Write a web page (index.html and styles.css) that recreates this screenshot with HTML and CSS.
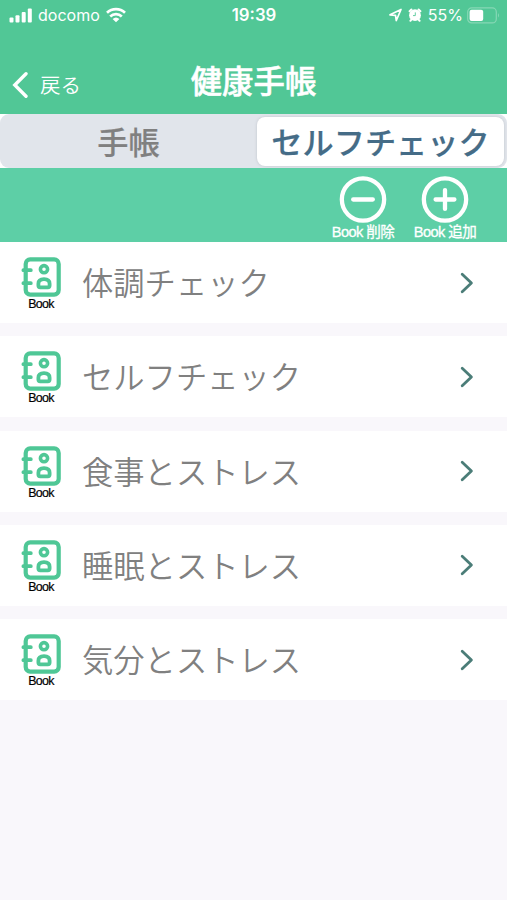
FILE: index.html
```html
<!DOCTYPE html>
<html lang="ja">
<head>
    <meta charset="UTF-8">
    <meta name="viewport" content="width=device-width, initial-scale=1.0">
    <title>健康手帳</title>
    <link rel="stylesheet" href="styles.css">
</head>
<body>
    <svg class="defs" width="0" height="0">
        <symbol id="book" viewBox="0 0 40 40">
            <g fill="none" stroke="#4fc796" stroke-linecap="round">
                <rect x="4.7" y="2.4" width="33" height="35.2" rx="4.5" stroke-width="4.2"/>
                <path d="M2.4 13.2h7.4M2.4 26.2h7.4" stroke-width="3.8"/>
                <circle cx="23" cy="12.2" r="3.6" stroke-width="3.6"/>
                <path d="M17.4 28.6v-1.8q0-4.6 5.6-4.6t5.6 4.6v1.8q0 1.8-1.8 1.8h-7.6q-1.8 0-1.8-1.8z" stroke-width="3.8" stroke-linejoin="round"/>
            </g>
        </symbol>
        <symbol id="arrow" viewBox="0 0 14 22">
            <path d="M2.2 2.2 11.4 11 2.2 19.8" fill="none" stroke="#4b7d78" stroke-width="2.8" stroke-linecap="round" stroke-linejoin="round"/>
        </symbol>
    </svg>

    <div class="header">
        <div class="status">
            <div class="status-left">
                <svg width="23" height="15" viewBox="0 0 23 15" fill="#fff">
                    <rect x="0.5" y="9.5" width="4" height="5" rx="1"/>
                    <rect x="6.5" y="7.3" width="4" height="7.2" rx="1"/>
                    <rect x="12.7" y="4" width="4" height="10.5" rx="1"/>
                    <rect x="18.8" y="0.5" width="4" height="14" rx="1"/>
                </svg>
                <span class="carrier">docomo</span>
                <svg width="20" height="16" viewBox="0 0 20 16" fill="none" stroke="#fff" stroke-width="2.7">
                    <path d="M1 5.8a13 13 0 0 1 18 0"/>
                    <path d="M4.2 9.4a8.4 8.4 0 0 1 11.6 0"/>
                    <path d="M10 15.2 6.6 12a5 5 0 0 1 6.8 0z" fill="#fff" stroke="none"/>
                </svg>
            </div>
            <span class="time">19:39</span>
            <div class="status-right">
                <svg width="13" height="14" viewBox="0 0 13 14" fill="none" stroke="#fff" stroke-width="1.7" stroke-linejoin="round">
                    <path d="M1 6.8 12 1.5 7.3 12.5 6.5 7.3z"/>
                </svg>
                <svg class="alarm" width="14" height="14" viewBox="0 0 14 14">
                    <circle cx="7" cy="7.2" r="5.9" fill="#fff"/>
                    <path d="M1.6 3.2 3.4 1.5M12.4 3.2 10.6 1.5M3.2 11.8 2.4 12.8M10.8 11.8l.8 1" stroke="#fff" stroke-width="2" stroke-linecap="round"/>
                    <path d="M7.3 4.4v3.2H5" fill="none" stroke="#51c796" stroke-width="0.9"/>
                </svg>
                <span class="percent">55%</span>
                <svg width="33" height="17" viewBox="0 0 33 17">
                    <rect x="0.7" y="0.9" width="28.6" height="15" rx="4" fill="none" stroke="#86d8b5" stroke-width="1.2"/>
                    <rect x="2.6" y="2.8" width="13.6" height="11.2" rx="2" fill="#fff"/>
                    <path d="M31 6v4.6q2-2.3 0-4.6" fill="#86d8b5"/>
                </svg>
            </div>
        </div>
        <div class="nav">
            <a class="back">
                <svg width="16" height="26" viewBox="0 0 16 26">
                    <path d="M14 1.8 2.8 13 14 24.2" fill="none" stroke="#fff" stroke-width="3.4" stroke-linecap="round"/>
                </svg>
                <span>戻る</span>
            </a>
            <h1 class="title">健康手帳</h1>
        </div>
    </div>

    <div class="tabs">
        <div class="tab">手帳</div>
        <div class="tab active">セルフチェック</div>
    </div>

    <div class="tools">
        <div class="tool">
            <svg width="48" height="48" viewBox="0 0 48 48" fill="none" stroke="#fff" stroke-width="4.4" stroke-linecap="round">
                <circle cx="24" cy="24" r="21.6"/>
                <path d="M14 24h20"/>
            </svg>
            <span>Book 削除</span>
        </div>
        <div class="tool">
            <svg width="48" height="48" viewBox="0 0 48 48" fill="none" stroke="#fff" stroke-width="4.4" stroke-linecap="round">
                <circle cx="24" cy="24" r="21.6"/>
                <path d="M14.4 24h19.2M24 14.4v19.2"/>
            </svg>
            <span>Book 追加</span>
        </div>
    </div>

    <div class="list">
        <div class="item">
            <div class="book"><svg width="40" height="40"><use href="#book"/></svg><span>Book</span></div>
            <span class="name">体調チェック</span>
            <svg class="arrow" width="14" height="22"><use href="#arrow"/></svg>
        </div>
        <div class="item">
            <div class="book"><svg width="40" height="40"><use href="#book"/></svg><span>Book</span></div>
            <span class="name">セルフチェック</span>
            <svg class="arrow" width="14" height="22"><use href="#arrow"/></svg>
        </div>
        <div class="item">
            <div class="book"><svg width="40" height="40"><use href="#book"/></svg><span>Book</span></div>
            <span class="name">食事とストレス</span>
            <svg class="arrow" width="14" height="22"><use href="#arrow"/></svg>
        </div>
        <div class="item">
            <div class="book"><svg width="40" height="40"><use href="#book"/></svg><span>Book</span></div>
            <span class="name">睡眠とストレス</span>
            <svg class="arrow" width="14" height="22"><use href="#arrow"/></svg>
        </div>
        <div class="item">
            <div class="book"><svg width="40" height="40"><use href="#book"/></svg><span>Book</span></div>
            <span class="name">気分とストレス</span>
            <svg class="arrow" width="14" height="22"><use href="#arrow"/></svg>
        </div>
    </div>
</body>
</html>
```
FILE: styles.css
```css
* {
    box-sizing: border-box;
}

body {
    margin: 0;
    min-height: 900px;
    background-color: #f9f7fb;
    font-family: "Liberation Sans", "Noto Sans CJK JP", sans-serif;
}

.defs {
    display: block;
}

.header {
    height: 114px;
    background-color: #51c796;
    color: #fff;
}

.status {
    display: grid;
    grid-template-columns: 1fr auto 1fr;
    align-items: center;
    height: 30px;
    padding: 0 7px 0 9px;
    font-family: Inter, sans-serif;
    font-size: 16.5px;
    line-height: 20px;
}

.status-left,
.status-right {
    display: flex;
    align-items: center;
}

.status-right {
    justify-content: flex-end;
}

.carrier {
    margin: 0 6px 0 6px;
    font-size: 16px;
}

.time {
    margin-right: 1px;
    font-size: 16.8px;
    font-weight: 600;
}

.alarm {
    margin: 0 6px 0 6px;
}

.percent {
    margin-right: 4px;
    font-size: 16px;
}

.nav {
    display: grid;
    grid-template-columns: 1fr auto 1fr;
    align-items: center;
    height: 84px;
    padding: 16px 0 0 12px;
    font-family: "Noto Sans CJK JP", sans-serif;
}

.back {
    display: flex;
    align-items: center;
    gap: 12px;
    padding-top: 9px;
    font-size: 20.5px;
    font-weight: 350;
    line-height: 26px;
}

.back span {
    padding-bottom: 1px;
}

.title {
    margin: 0 12px 0 0;
    font-size: 31.4px;
    font-weight: 500;
    line-height: 40px;
    -webkit-text-stroke: 0.5px #fff;
}

.tabs {
    display: flex;
    height: 54px;
    padding: 3px 2px 2px 0;
    border-radius: 9px;
    background-color: #e1e5eb;
    box-shadow: 0 0 0 9px #fff;
    clip-path: inset(0);
    font-family: "Noto Sans CJK JP", sans-serif;
    font-size: 31.2px;
    font-weight: 500;
}

.tab {
    width: 257px;
    color: #808080;
    line-height: 48px;
    text-align: center;
    -webkit-text-stroke: 0.2px;
}

.tab.active {
    width: 247px;
    border-radius: 8px;
    background-color: #fff;
    box-shadow: 0 0 3px #bfc3ca;
    color: #456c87;
}

.tools {
    display: flex;
    justify-content: flex-end;
    gap: 12px;
    height: 74px;
    padding: 8px 27px 0 0;
    background-color: #5dcfa6;
}

.tool {
    display: flex;
    flex-direction: column;
    align-items: center;
    width: 70px;
    color: #fff;
    font-size: 14.6px;
    line-height: 19px;
    letter-spacing: -0.6px;
    white-space: nowrap;
    -webkit-text-stroke: 0.3px #fff;
}

.list {
    display: flex;
    flex-direction: column;
    gap: 13.3px;
}

.item {
    display: flex;
    align-items: center;
    height: 81px;
    padding: 0 33px 0 21px;
    background-color: #fff;
}

.book {
    display: flex;
    flex-direction: column;
    align-items: center;
    width: 40px;
    padding-top: 3px;
    font-size: 12.4px;
    line-height: 14px;
    letter-spacing: -0.7px;
    -webkit-text-stroke: 0.2px #000;
}

.name {
    flex: 1;
    margin-left: 21px;
    padding-bottom: 1px;
    color: #808080;
    font-family: "Noto Sans CJK JP", sans-serif;
    font-size: 31.3px;
    font-weight: 350;
    line-height: 40px;
}
```
